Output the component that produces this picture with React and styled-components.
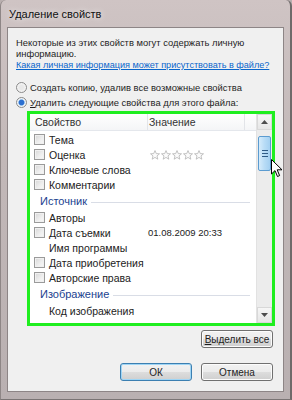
import React from "react"
import styled, { createGlobalStyle } from "styled-components"

const GlobalStyle = createGlobalStyle`
  html, body {
    margin: 0;
    padding: 0;
    background: #b9afaf;
  }
  body {
    font-family: "Liberation Sans", Arial, sans-serif;
    font-size: 10.5px;
    color: #1a1a1a;
  }
`

const rows = [
  { type: "item", label: "Тема" },
  { type: "item", label: "Оценка", stars: true },
  { type: "item", label: "Ключевые слова" },
  { type: "item", label: "Комментарии" },
  { type: "group", label: "Источник" },
  { type: "item", label: "Авторы" },
  { type: "item", label: "Дата съемки", value: "01.08.2009 20:33" },
  { type: "item", label: "Имя программы", noCheck: true },
  { type: "item", label: "Дата приобретения" },
  { type: "item", label: "Авторские права" },
  { type: "group", label: "Изображение" },
  { type: "item", label: "Код изображения", noCheck: true },
]

const Star = () => (
  <svg width="10" height="10" viewBox="0 0 10 10">
    <path
      d="M5 0.6 L6.3 3.6 L9.5 3.8 L7 5.9 L7.8 9.2 L5 7.4 L2.2 9.2 L3 5.9 L0.5 3.8 L3.7 3.6 Z"
      fill="#fbfbfb"
      stroke="#b4b4b4"
      strokeWidth="0.8"
    />
  </svg>
)

const Arrow = ({ down }) => (
  <svg width="7" height="4" viewBox="0 0 7 4">
    <path d={down ? "M0 0 L7 0 L3.5 4 Z" : "M0 4 L7 4 L3.5 0 Z"} fill="#4d4d4d" />
  </svg>
)

const Cursor = () => (
  <CursorIcon width="12" height="19" viewBox="0 0 12 19">
    <path
      d="M0.5 0.5 L0.5 15 L4 11.6 L6.5 17.5 L8.6 16.6 L6.2 10.8 L11 10.8 Z"
      fill="#ffffff"
      stroke="#000"
      strokeWidth="1"
    />
  </CursorIcon>
)

const App = () => {
  return (
    <>
      <GlobalStyle />
      <Window>
        <TitleBar>Удаление свойств</TitleBar>
        <Body>
          <Intro>
            Некоторые из этих свойств могут содержать личную
            <br />
            информацию.
          </Intro>
          <HelpLink>Какая личная информация может присутствовать в файле?</HelpLink>
          <RadioRow $first>
            <Radio />
            <span>
              Соз<u>д</u>ать копию, удалив все возможные свойства
            </span>
          </RadioRow>
          <RadioRow>
            <Radio $checked />
            <span>
              <u>У</u>далить следующие свойства для этого файла:
            </span>
          </RadioRow>

          <Highlight>
            <ListView>
              <ListMain>
                <HeaderRow>
                  <NameHead>Свойство</NameHead>
                  <ValueHead>Значение</ValueHead>
                  <SpareHead />
                </HeaderRow>
                <Rows>
                  {rows.map((r, i) =>
                    r.type === "group" ? (
                      <GroupRow key={i}>
                        <span>{r.label}</span>
                        <GroupLine />
                      </GroupRow>
                    ) : (
                      <ItemRow key={i}>
                        <NameCell>
                          {r.noCheck ? <CheckSpacer /> : <CheckBox />}
                          <span>{r.label}</span>
                        </NameCell>
                        <ValueCell>
                          {r.stars ? (
                            <Stars>
                              <Star />
                              <Star />
                              <Star />
                              <Star />
                              <Star />
                            </Stars>
                          ) : (
                            r.value
                          )}
                        </ValueCell>
                      </ItemRow>
                    )
                  )}
                </Rows>
              </ListMain>
              <ScrollBar>
                <ScrollButton>
                  <Arrow />
                </ScrollButton>
                <Track>
                  <Thumb>
                    <Grip />
                    <Grip />
                    <Grip />
                  </Thumb>
                </Track>
                <ScrollButton>
                  <Arrow down />
                </ScrollButton>
              </ScrollBar>
            </ListView>
            <Cursor />
          </Highlight>

          <ButtonRow>
            <Button>
              <u>В</u>ыделить все
            </Button>
          </ButtonRow>
          <ButtonRow $footer>
            <Button $default>ОК</Button>
            <Button>Отмена</Button>
          </ButtonRow>
        </Body>
      </Window>
    </>
  )
}

const Window = styled.div`
  width: 292px;
  height: 400px;
  box-sizing: border-box;
  display: flex;
  flex-direction: column;
  background: linear-gradient(180deg, #cfc4c4 0%, #c2b8b8 40%, #b9b0b1 100%);
  border-left: 1px solid #8e8686;
  border-right: 2px solid #6f6a6a;
  border-bottom: 1px solid #7a7474;
  border-radius: 6px 6px 0 0;
  overflow: hidden;
`

const TitleBar = styled.div`
  height: 27px;
  flex: none;
  box-sizing: border-box;
  padding: 8px 0 0 8px;
  font-size: 11px;
  color: #111;
  text-shadow: 0 0 6px rgba(255, 255, 255, 0.9);
`

const Body = styled.div`
  flex: 1;
  margin: 0 6px 7px 6px;
  background: #f0f0f0;
  border: 1px solid #8d8586;
  padding: 9px 10px 0 8px;
  display: flex;
  flex-direction: column;
`

const Intro = styled.div`
  font-size: 9.4px;
  line-height: 11px;
  white-space: nowrap;
  color: #1e1e1e;
`

const HelpLink = styled.div`
  margin-top: 1px;
  font-size: 9.1px;
  line-height: 11px;
  color: #0a66cc;
  text-decoration: underline;
  white-space: nowrap;
`

const RadioRow = styled.div`
  display: flex;
  align-items: center;
  gap: 3px;
  height: 14px;
  margin-top: ${p => (p.$first ? "9px" : "1px")};
  font-size: 9.4px;
  white-space: nowrap;
  color: #1e1e1e;
`

const Radio = styled.span`
  width: 11px;
  height: 11px;
  box-sizing: border-box;
  border-radius: 50%;
  border: 1px solid #8a8a8a;
  background: ${p =>
    p.$checked
      ? "radial-gradient(circle, #2c6fd0 0 2.5px, #8fbcea 3px, #eef3f8 3.6px)"
      : "radial-gradient(circle, #e8e8e8 0 2px, #f8f8f8 5px)"};
  flex: none;
`

const Highlight = styled.div`
  position: relative;
  margin: 2px -2px 0 11px;
  height: 215px;
  box-sizing: border-box;
  border: 3px solid #1fee1f;
  background: #fff;
  display: flex;
`

const ListView = styled.div`
  flex: 1;
  display: flex;
  min-width: 0;
`

const ListMain = styled.div`
  flex: 1;
  display: flex;
  flex-direction: column;
  min-width: 0;
  overflow: hidden;
`

const HeaderRow = styled.div`
  height: 16px;
  flex: none;
  display: flex;
  padding-left: 4px;
  background: linear-gradient(180deg, #ffffff 0%, #f4f5f7 100%);
  border-bottom: 1px solid #e4e7ec;
  line-height: 16px;
  color: #333;
  white-space: nowrap;
`

const NameHead = styled.div`
  width: 114px;
  flex: none;
  box-sizing: border-box;
  padding-left: 1px;
  border-right: 1px solid #e2e4e8;
`

const ValueHead = styled.div`
  width: 97px;
  flex: none;
  box-sizing: border-box;
  padding-left: 1px;
  border-right: 1px solid #e2e4e8;
`

const SpareHead = styled.div`
  flex: 1;
`

const Rows = styled.div`
  padding-top: 1px;
  display: flex;
  flex-direction: column;
`

const ItemRow = styled.div`
  height: 15px;
  display: flex;
  align-items: center;
  padding-left: 4px;
  color: #222;
`

const NameCell = styled.div`
  width: 114px;
  flex: none;
  display: flex;
  align-items: center;
  gap: 4px;
  white-space: nowrap;
`

const ValueCell = styled.div`
  white-space: nowrap;
  display: flex;
  align-items: center;
  font-size: 9.5px;
`

const CheckBox = styled.span`
  width: 11px;
  height: 11px;
  flex: none;
  box-sizing: border-box;
  border: 1px solid #9a9a9a;
  background: linear-gradient(135deg, #d6d6d6 0%, #efefef 60%, #f8f8f8 100%);
  box-shadow: inset 0 0 0 1px #f0f0f0;
`

const CheckSpacer = styled.span`
  width: 11px;
  flex: none;
`

const Stars = styled.div`
  display: flex;
  gap: 1px;
  margin-left: 2px;
`

const GroupRow = styled.div`
  height: 18px;
  display: flex;
  align-items: center;
  gap: 4px;
  padding: 0 6px 0 10px;
  font-size: 11px;
  color: #213f8f;
`

const GroupLine = styled.span`
  flex: 1;
  height: 1px;
  background: #d9dde6;
  margin-top: 2px;
`

const ScrollBar = styled.div`
  width: 15px;
  flex: none;
  display: flex;
  flex-direction: column;
  background: #ececec;
  border-left: 1px solid #e2e2e2;
`

const ScrollButton = styled.div`
  height: 16px;
  flex: none;
  display: flex;
  align-items: center;
  justify-content: center;
  background: linear-gradient(180deg, #f6f6f6 0%, #e6e6e6 100%);
  border: 1px solid #d8d8d8;
  box-sizing: border-box;
`

const Track = styled.div`
  flex: 1;
  padding-top: 6px;
`

const Thumb = styled.div`
  height: 35px;
  margin: 0 1px;
  box-sizing: border-box;
  border: 1px solid #5b9bd0;
  border-radius: 2px;
  background: linear-gradient(90deg, #d6ecfb 0%, #b8dcf6 50%, #a3d0f1 100%);
  display: flex;
  flex-direction: column;
  align-items: center;
  justify-content: center;
  gap: 2px;
`

const Grip = styled.span`
  width: 6px;
  height: 1px;
  background: #2e5b86;
`

const CursorIcon = styled.svg`
  position: absolute;
  right: -11px;
  top: 45px;
`

const ButtonRow = styled.div`
  display: flex;
  justify-content: flex-end;
  gap: 9px;
  margin-top: ${p => (p.$footer ? "15px" : "4px")};
`

const Button = styled.div`
  width: 72px;
  height: 18px;
  box-sizing: border-box;
  display: flex;
  align-items: center;
  justify-content: center;
  border: 1px solid ${p => (p.$default ? "#3c7fb1" : "#707070")};
  border-radius: 3px;
  background: linear-gradient(180deg, #f2f2f2 0%, #ebebeb 50%, #dddddd 51%, #cfcfcf 100%);
  box-shadow: ${p => (p.$default ? "inset 0 0 0 1px #9fd5f5" : "inset 0 0 0 1px #fcfcfc")};
  font-size: 10px;
  color: #1e1e1e;
  white-space: nowrap;
`

export default App
